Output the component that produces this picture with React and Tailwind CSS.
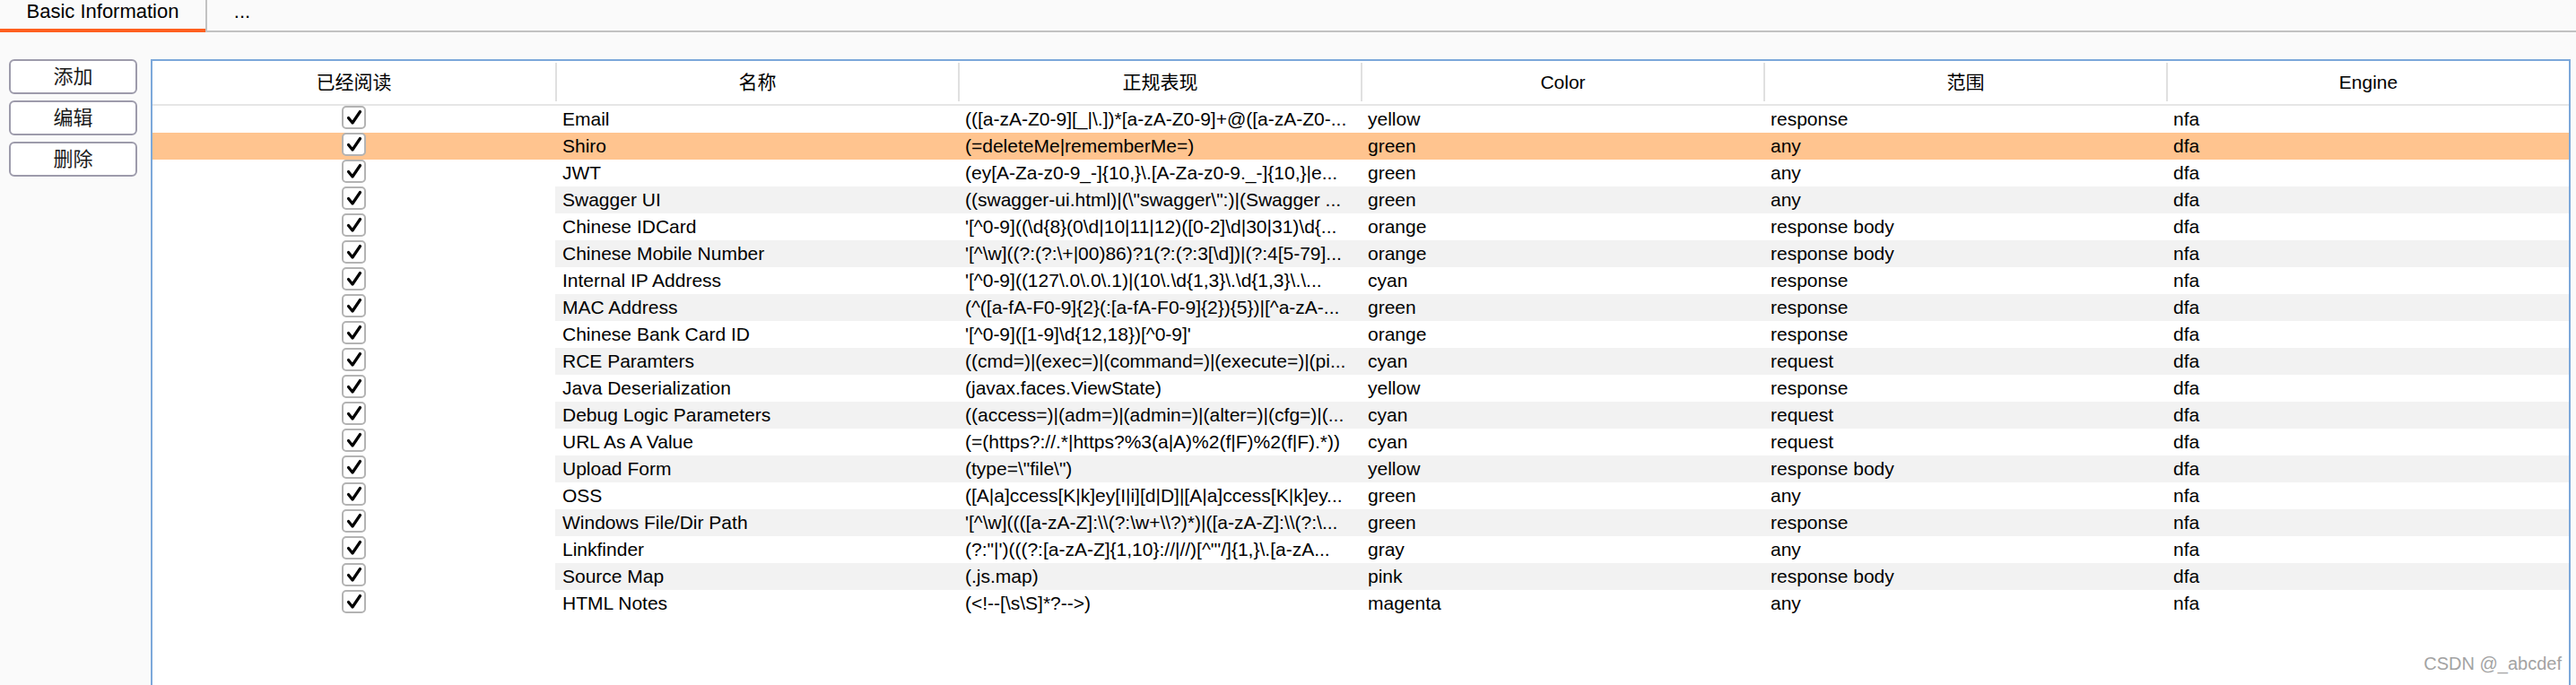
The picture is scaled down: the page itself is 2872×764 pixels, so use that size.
const rows = [
  { name: "Email", regex: "(([a-zA-Z0-9][_|\\.])*[a-zA-Z0-9]+@([a-zA-Z0-...", color: "yellow", scope: "response", engine: "nfa" },
  { name: "Shiro", regex: "(=deleteMe|rememberMe=)", color: "green", scope: "any", engine: "dfa" },
  { name: "JWT", regex: "(ey[A-Za-z0-9_-]{10,}\\.[A-Za-z0-9._-]{10,}|e...", color: "green", scope: "any", engine: "dfa" },
  { name: "Swagger UI", regex: "((swagger-ui.html)|(\\\"swagger\\\":)|(Swagger ...", color: "green", scope: "any", engine: "dfa" },
  { name: "Chinese IDCard", regex: "'[^0-9]((\\d{8}(0\\d|10|11|12)([0-2]\\d|30|31)\\d{...", color: "orange", scope: "response body", engine: "dfa" },
  { name: "Chinese Mobile Number", regex: "'[^\\w]((?:(?:\\+|00)86)?1(?:(?:3[\\d])|(?:4[5-79]...", color: "orange", scope: "response body", engine: "nfa" },
  { name: "Internal IP Address", regex: "'[^0-9]((127\\.0\\.0\\.1)|(10\\.\\d{1,3}\\.\\d{1,3}\\.\\...", color: "cyan", scope: "response", engine: "nfa" },
  { name: "MAC Address", regex: "(^([a-fA-F0-9]{2}(:[a-fA-F0-9]{2}){5})|[^a-zA-...", color: "green", scope: "response", engine: "dfa" },
  { name: "Chinese Bank Card ID", regex: "'[^0-9]([1-9]\\d{12,18})[^0-9]'", color: "orange", scope: "response", engine: "dfa" },
  { name: "RCE Paramters", regex: "((cmd=)|(exec=)|(command=)|(execute=)|(pi...", color: "cyan", scope: "request", engine: "dfa" },
  { name: "Java Deserialization", regex: "(javax.faces.ViewState)", color: "yellow", scope: "response", engine: "dfa" },
  { name: "Debug Logic Parameters", regex: "((access=)|(adm=)|(admin=)|(alter=)|(cfg=)|(...", color: "cyan", scope: "request", engine: "dfa" },
  { name: "URL As A Value", regex: "(=(https?://.*|https?%3(a|A)%2(f|F)%2(f|F).*))", color: "cyan", scope: "request", engine: "dfa" },
  { name: "Upload Form", regex: "(type=\\\"file\\\")", color: "yellow", scope: "response body", engine: "dfa" },
  { name: "OSS", regex: "([A|a]ccess[K|k]ey[I|i][d|D]|[A|a]ccess[K|k]ey...", color: "green", scope: "any", engine: "nfa" },
  { name: "Windows File/Dir Path", regex: "'[^\\w]((([a-zA-Z]:\\\\(?:\\w+\\\\?)*)|([a-zA-Z]:\\\\(?:\\...", color: "green", scope: "response", engine: "nfa" },
  { name: "Linkfinder", regex: "(?:\"|')(((?:[a-zA-Z]{1,10}://|//)[^\"'/]{1,}\\.[a-zA...", color: "gray", scope: "any", engine: "nfa" },
  { name: "Source Map", regex: "(.js.map)", color: "pink", scope: "response body", engine: "dfa" },
  { name: "HTML Notes", regex: "(<!--[\\s\\S]*?-->)", color: "magenta", scope: "any", engine: "nfa" },
];

const headers = ["已经阅读", "名称", "正规表现", "Color", "范围", "Engine"];

const font = { fontFamily: '"Liberation Sans", Arial, "Noto Sans CJK SC", sans-serif' };

const Check = () => (
  <div className="w-[27px] h-[26px] rounded-[5px] border-2 border-[#b3b3b3] bg-white flex items-center justify-center">
    <svg width="20" height="20" viewBox="0 0 20 20">
      <path d="M3.5 10.5 L8 16 L16.5 3.5" fill="none" stroke="#000" strokeWidth="3.2" strokeLinecap="round" strokeLinejoin="round" />
    </svg>
  </div>
);

const SideButton = ({ label }) => (
  <button className="w-[143px] h-[39px] rounded-[6px] border-2 border-[#9d9bab] bg-white text-[22px] text-[#1a1a1a] flex items-center justify-center">
    {label}
  </button>
);

export default function App() {
  return (
    <div className="relative w-[2872px] h-[764px] bg-[#fafafa] overflow-hidden text-black" style={font}>
      {/* tabs */}
      <div className="flex h-[36px] border-b-2 border-[#c2c2c2]">
        <div className="w-[229px] h-[36px] -mb-[2px] border-b-4 border-[#ff5f1f] text-center text-[22px] leading-[26px]">
          Basic Information
        </div>
        <div className="w-[80px] border-l-2 border-[#c2c2c2] text-center text-[22px] leading-[26px]">...</div>
      </div>

      <div className="flex pt-[30px] pl-[10px] gap-[15px]">
        {/* buttons */}
        <div className="flex flex-col gap-[7px]">
          <SideButton label="添加" />
          <SideButton label="编辑" />
          <SideButton label="删除" />
        </div>

        {/* table */}
        <div className="w-[2698px] h-[698px] border-2 border-b-0 border-[#7ca8da] bg-white">
          <div className="grid grid-cols-6 h-[48px]">
            {headers.map((h, i) => (
              <div key={h} className="flex items-start">
                <div
                  className={`w-full mt-[2px] h-[43px] flex items-center justify-center text-[21px] ${i > 0 ? "border-l-2 border-[#e0e0e0]" : ""}`}
                >
                  {h}
                </div>
              </div>
            ))}
          </div>
          <div className="h-[2px] bg-[#e6e6e6]" />
          {rows.map((r, idx) => {
            const selected = idx === 1;
            const striped = idx % 2 === 1;
            const cellBg = selected ? "bg-[#ffc48f]" : striped ? "bg-[#f2f2f2]" : "bg-white";
            return (
              <div key={r.name} className={`grid grid-cols-6 h-[30px] ${selected ? "bg-[#ffc48f]" : ""}`}>
                <div className="flex justify-center">
                  <Check />
                </div>
                {[r.name, r.regex, r.color, r.scope, r.engine].map((v, j) => (
                  <div key={j} className={`${cellBg} pl-[8px] pr-[2px] text-[21px] leading-[30px] whitespace-nowrap overflow-hidden`}>
                    {v}
                  </div>
                ))}
              </div>
            );
          })}
        </div>
      </div>

      <div className="absolute right-[16px] bottom-[9px] text-[20px] text-[#a3a3a3]">CSDN @_abcdef</div>
    </div>
  );
}
